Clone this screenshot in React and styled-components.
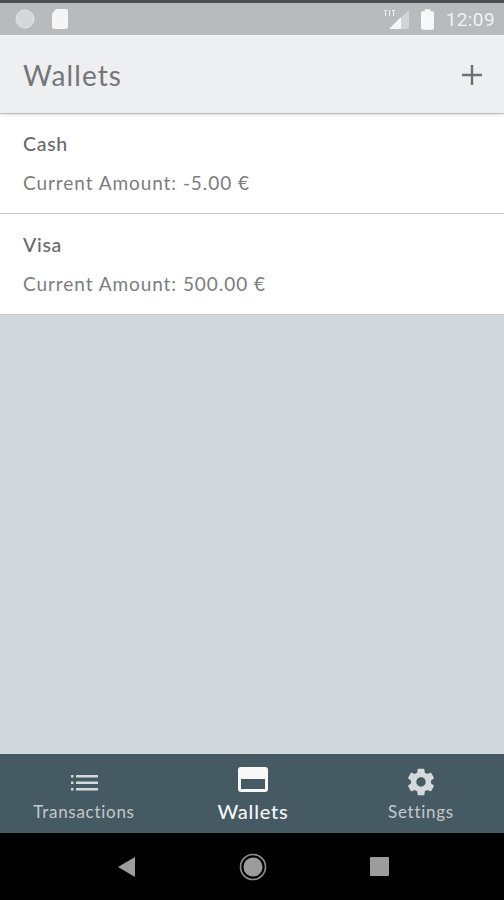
import styled, { createGlobalStyle } from "styled-components";

const GlobalStyle = createGlobalStyle`
	html, body {
		margin: 0;
		padding: 0;
		height: 100%;
	}
	#root {
		height: 100%;
	}
`;

const Screen = styled.div`
	width: 504px;
	height: 900px;
	display: flex;
	flex-direction: column;
	background-color: #d1d8db;
	font-family: "Lato", "Open Sans", sans-serif;
	overflow: hidden;
`;

const StatusBar = styled.div`
	height: 32px;
	flex: none;
	border-top: 3px solid #4c4d4f;
	background-color: #b9babc;
	display: flex;
	align-items: center;
	justify-content: space-between;
	padding: 0 9px 0 15px;
`;

const StatusGroup = styled.div`
	display: flex;
	align-items: center;
	gap: ${(p) => p.$gap}px;
`;

const Clock = styled.span`
	font-family: "Roboto", sans-serif;
	font-size: 19px;
	color: #f0f1f2;
	letter-spacing: 0.4px;
`;

const AppBar = styled.header`
	height: 78px;
	box-sizing: border-box;
	flex: none;
	background-color: #eeeff1;
	display: flex;
	align-items: center;
	justify-content: space-between;
	padding: 2px 22px 0 23px;
	box-shadow: 0 2px 3px rgba(0, 0, 0, 0.14);
	position: relative;
`;

const Title = styled.h1`
	margin: 0;
	font-size: 28px;
	font-weight: 400;
	color: #747678;
	letter-spacing: 1.1px;
`;

const WalletList = styled.main`
	flex: 1;
	padding-top: 1px;
`;

const WalletRow = styled.div`
	height: 99px;
	background-color: #ffffff;
	border-bottom: 1px solid #c3cacd;
	padding: 18px 23px 0;
	box-sizing: content-box;
	height: 81px;
	display: flex;
	flex-direction: column;

	& + & {
		padding-top: 19px;
	}
`;

const WalletName = styled.div`
	font-size: 19.5px;
	line-height: 24px;
	font-weight: 500;
	color: #67696b;
	letter-spacing: 0.7px;
`;

const WalletAmount = styled.div`
	margin-top: 15px;
	font-size: 19px;
	line-height: 24px;
	color: #7b7d7f;
	letter-spacing: 0.94px;
`;

const BottomNav = styled.nav`
	height: 79px;
	flex: none;
	background-color: #465a63;
	display: grid;
	grid-template-columns: repeat(3, 168px);
	padding-left: 1px;
`;

const NavItem = styled.div`
	display: flex;
	flex-direction: column;
	align-items: center;
	color: ${(p) => (p.$active ? "#f4f6f7" : "#c3c9cc")};

	&:first-child {
		padding-right: 2px;
	}
`;

const NavIcon = styled.div`
	height: 30px;
	margin-top: ${(p) => (p.$active ? 10 : 13)}px;
	display: flex;
	align-items: center;
	justify-content: center;
`;

const NavLabel = styled.span`
	font-size: ${(p) => (p.$active ? 20 : 17)}px;
	font-weight: ${(p) => (p.$active ? 500 : 400)};
	line-height: 24px;
	margin-top: ${(p) => (p.$active ? 5 : 3)}px;
	letter-spacing: ${(p) => (p.$active ? 0.8 : 0.72)}px;
`;

const SystemNav = styled.div`
	height: 67px;
	flex: none;
	background-color: #000000;
	display: grid;
	grid-template-columns: repeat(3, 126px);
	justify-content: center;
	justify-items: center;
	align-items: center;
	padding-left: 2px;
`;

const SimIcon = () => (
	<svg width="18" height="20" viewBox="0 0 18 20">
		<path d="M5 0h10a2 2 0 0 1 2 2v16a2 2 0 0 1-2 2H3a2 2 0 0 1-2-2V5z" fill="#f5f5f6" />
	</svg>
);

const SignalIcon = () => (
	<svg width="25" height="22" viewBox="0 0 25 22">
		<path d="M25 2v19H5z" fill="#d2d3d5" />
		<path d="M17 9v12H5z" fill="#f5f5f6" />
		<path d="M0 2h3v1H2v5H1V3H0zM5 2h1v6H5zM8 2h3v1h-1v5H9V3H8z" fill="#f0f0f1" />
	</svg>
);

const BatteryIcon = () => (
	<svg width="13" height="21" viewBox="0 0 14 22">
		<path d="M4 2V0h6v2h2a2 2 0 0 1 2 2v16a2 2 0 0 1-2 2H2a2 2 0 0 1-2-2V4a2 2 0 0 1 2-2z" fill="#f8f8f9" />
	</svg>
);

const PlusIcon = () => (
	<svg width="20" height="20" viewBox="0 0 20 20">
		<path d="M10 0v20M0 10h20" stroke="#6e7072" strokeWidth="2.4" />
	</svg>
);

const ListIcon = () => (
	<svg width="27" height="17" viewBox="0 0 27 17" fill="#d4d9db">
		<rect x="0" y="1" width="2.5" height="2.5" />
		<rect x="0" y="7.5" width="2.5" height="2.5" />
		<rect x="0" y="14" width="2.5" height="2.5" />
		<rect x="5" y="1" width="22" height="2.5" />
		<rect x="5" y="7.5" width="22" height="2.5" />
		<rect x="5" y="14" width="22" height="2.5" />
	</svg>
);

const CardIcon = () => (
	<svg width="30" height="25" viewBox="0 0 30 25">
		<path
			fillRule="evenodd"
			fill="#f7f8f8"
			d="M3 0h24a3 3 0 0 1 3 3v19a3 3 0 0 1-3 3H3a3 3 0 0 1-3-3V3a3 3 0 0 1 3-3zM3 12v10h24V12z"
		/>
	</svg>
);

const GearIcon = () => (
	<svg width="32" height="32" viewBox="0 0 24 24" fill="#d4d9db">
		<path d="M19.43 12.98c.04-.32.07-.64.07-.98s-.03-.66-.07-.98l2.11-1.65c.19-.15.24-.42.12-.64l-2-3.46c-.12-.22-.39-.3-.61-.22l-2.49 1c-.52-.4-1.08-.73-1.69-.98l-.38-2.65C14.46 2.18 14.25 2 14 2h-4c-.25 0-.46.18-.49.42l-.38 2.65c-.61.25-1.17.59-1.69.98l-2.49-1c-.23-.09-.49 0-.61.22l-2 3.46c-.13.22-.07.49.12.64l2.11 1.65c-.04.32-.07.65-.07.98s.03.66.07.98l-2.11 1.65c-.19.15-.24.42-.12.64l2 3.46c.12.22.39.3.61.22l2.49-1c.52.4 1.08.73 1.69.98l.38 2.65c.03.24.24.42.49.42h4c.25 0 .46-.18.49-.42l.38-2.65c.61-.25 1.17-.59 1.69-.98l2.49 1c.23.09.49 0 .61-.22l2-3.46c.12-.22.07-.49-.12-.64l-2.11-1.65zM12 15.5c-1.93 0-3.5-1.57-3.5-3.5s1.57-3.5 3.5-3.5 3.5 1.57 3.5 3.5-1.57 3.5-3.5 3.5z" />
	</svg>
);

const wallets = [
	{ name: "Cash", amount: "-5.00 €" },
	{ name: "Visa", amount: "500.00 €" },
];

const App = () => {
	return (
		<Screen>
			<GlobalStyle />
			<StatusBar>
				<StatusGroup $gap={16}>
					<svg width="20" height="20" viewBox="0 0 20 20">
						<circle cx="10" cy="10" r="9" fill="#d6d7d8" stroke="#e4e5e6" strokeWidth="1" />
					</svg>
					<SimIcon />
				</StatusGroup>
				<StatusGroup $gap={12}>
					<SignalIcon />
					<BatteryIcon />
					<Clock>12:09</Clock>
				</StatusGroup>
			</StatusBar>
			<AppBar>
				<Title>Wallets</Title>
				<PlusIcon />
			</AppBar>
			<WalletList>
				{wallets.map((wallet) => (
					<WalletRow key={wallet.name}>
						<WalletName>{wallet.name}</WalletName>
						<WalletAmount>Current Amount: {wallet.amount}</WalletAmount>
					</WalletRow>
				))}
			</WalletList>
			<BottomNav>
				<NavItem>
					<NavIcon>
						<ListIcon />
					</NavIcon>
					<NavLabel>Transactions</NavLabel>
				</NavItem>
				<NavItem $active>
					<NavIcon $active>
						<CardIcon />
					</NavIcon>
					<NavLabel $active>Wallets</NavLabel>
				</NavItem>
				<NavItem>
					<NavIcon>
						<GearIcon />
					</NavIcon>
					<NavLabel>Settings</NavLabel>
				</NavItem>
			</BottomNav>
			<SystemNav>
				<svg width="18" height="20" viewBox="0 0 18 20">
					<path d="M17 0v20L0 10z" fill="#9c9c9c" />
				</svg>
				<svg width="28" height="28" viewBox="0 0 28 28">
					<circle cx="14" cy="14" r="12.5" fill="none" stroke="#8f8f8f" strokeWidth="1.6" />
					<circle cx="14" cy="14" r="9.5" fill="#9c9c9c" />
				</svg>
				<svg width="19" height="19" viewBox="0 0 19 19">
					<rect width="19" height="19" rx="1" fill="#9c9c9c" />
				</svg>
			</SystemNav>
		</Screen>
	);
};

export default App;
